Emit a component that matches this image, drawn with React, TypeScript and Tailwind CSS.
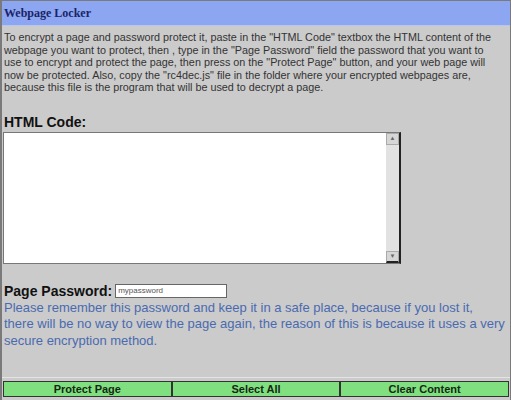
import React from "react";

export default function App() {
  const sans = { fontFamily: '"Liberation Sans", Arial, sans-serif' };
  return (
    <div className="w-[511px] h-[400px] bg-[#cbcbcb] border-l-2 border-r border-t border-[#7a7a7a] flex flex-col overflow-hidden" style={sans}>
      <div className="h-[25px] bg-[#8ca6f2] border-b border-[#b8c6ee] flex items-center px-[2px]">
        <span className="text-[12px] font-bold text-[#1a2466]" style={{ fontFamily: '"Liberation Serif", "Times New Roman", serif' }}>
          Webpage Locker
        </span>
      </div>
      <p className="px-[2px] pt-[5px] text-[10.8px] leading-[12.6px] text-[#333] whitespace-nowrap">
        To encrypt a page and password protect it, paste in the "HTML Code" textbox the HTML content of the<br />
        webpage you want to protect, then , type in the "Page Password" field the password that you want to<br />
        use to encrypt and protect the page, then press on the "Protect Page" button, and your web page will<br />
        now be protected. Also, copy the "rc4dec.js" file in the folder where your encrypted webpages are,<br />
        because this file is the program that will be used to decrypt a page.
      </p>
      <div className="mt-[21px] px-[2px] text-[14px] font-bold text-[#111] leading-[15px]">HTML Code:</div>
      <div className="ml-[1px] mt-[2px] w-[398px] h-[132px] bg-white border border-[#777] border-r-2 border-r-[#222] flex">
        <div className="flex-1" />
        <div className="w-[13px] bg-[#e2e2e2] flex flex-col justify-between">
          <div className="h-[12px] bg-[#d6d6d6] border border-[#aaa] flex items-center justify-center text-[6px] text-[#666]">▲</div>
          <div className="h-[12px] bg-[#d6d6d6] border border-[#aaa] border-b-2 border-b-[#222] flex items-center justify-center text-[6px] text-[#666]">▼</div>
        </div>
      </div>
      <div className="mt-[19px] px-[2px] flex items-center gap-[3px]">
        <span className="text-[14px] font-bold text-[#111] leading-[16px]">Page Password:</span>
        <div className="w-[112px] h-[14px] bg-white border border-[#666] flex items-center px-[2px] text-[8px] text-[#555]">mypassword</div>
      </div>
      <p className="px-[2px] mt-[1px] text-[13px] leading-[16.5px] text-[#4a6ab0] whitespace-nowrap">
        Please remember this password and keep it in a safe place, because if you lost it,<br />
        there will be no way to view the page again, the reason of this is because it uses a very<br />
        secure encryption method.
      </p>
      <div className="flex-1" />
      <div className="border-t border-[#e4e4e4] pt-[3px] pb-[3px] px-[1px] flex">
        <button className="flex-1 h-[16px] bg-[#80e080] border border-[#333] text-[11px] font-bold text-[#162816] leading-none">Protect Page</button>
        <button className="flex-1 h-[16px] bg-[#80e080] border border-[#333] text-[11px] font-bold text-[#162816] leading-none">Select All</button>
        <button className="flex-1 h-[16px] bg-[#80e080] border border-[#333] text-[11px] font-bold text-[#162816] leading-none">Clear Content</button>
      </div>
    </div>
  );
}
